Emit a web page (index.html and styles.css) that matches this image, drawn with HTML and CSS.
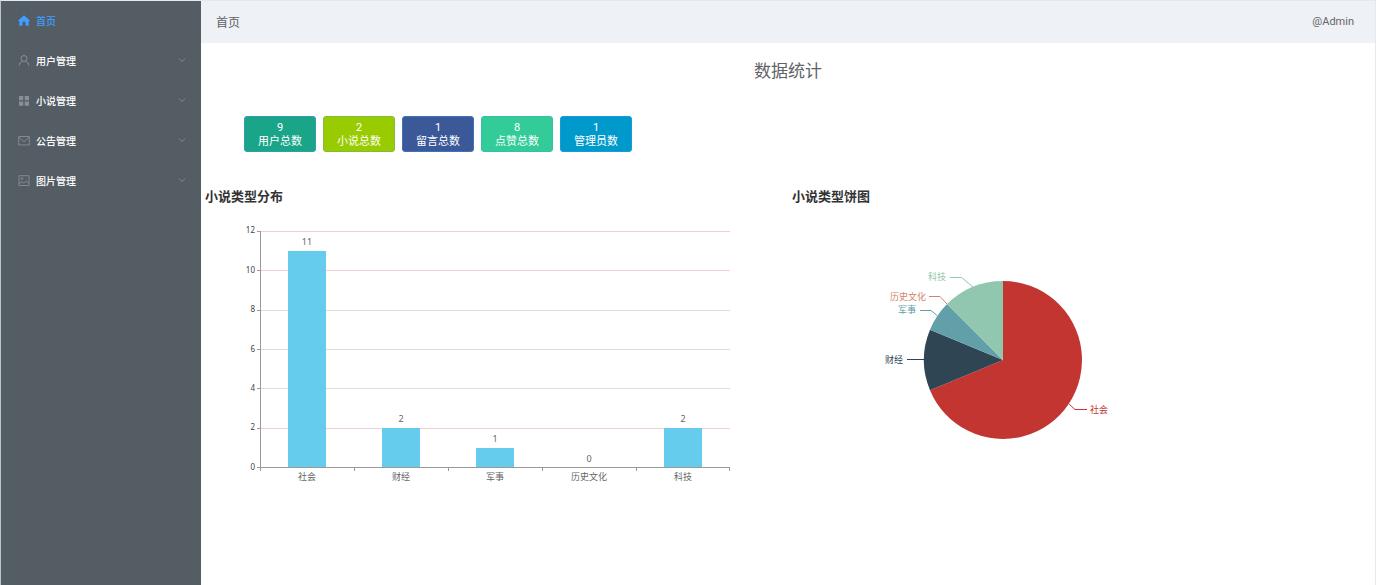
FILE: index.html
```html
<!DOCTYPE html>
<html lang="zh-CN">
<head>
  <meta charset="UTF-8" />
  <meta name="viewport" content="width=device-width, initial-scale=1" />
  <title>数据统计</title>
  <link rel="stylesheet" href="styles.css">
</head>
<body>

  <div class="layout">
    <!-- Sidebar -->
    <nav class="sidebar">
      <a href="#" class="menu-item active">
        <svg class="menu-icon" viewBox="0 0 12 12"><path d="M6 1.200 11.600 6.300v.9h-.9v4.600H7.600V9a1.600 1.600 0 0 0-3.200 0v2.800H1.300V7.200H.4v-.9z" fill="currentColor"/></svg>
        <span>首页</span>
      </a>
      <button type="button" class="menu-item">
        <svg class="menu-icon" viewBox="0 0 12 12"><g fill="none" stroke="currentColor"><circle cx="6" cy="4.500" r="3"/><path d="M1.200 11.800c0-2.500 1.600-4 3.300-4.400M10.800 11.800c0-2.500-1.600-4-3.300-4.400"/></g></svg>
        <span>用户管理</span>
        <svg class="arrow" viewBox="0 0 8 8"><path d="M.8 2.500 4 5.500l3.200-3" fill="none" stroke="currentColor"/></svg>
      </button>
      <button type="button" class="menu-item">
        <svg class="menu-icon" viewBox="0 0 12 12"><path d="M1 2h4.300v4.200H1zM6.700 2H11v4.200H6.700zM1 7.500h4.300v4.200H1zM6.700 7.500H11v4.200H6.700z" fill="currentColor"/></svg>
        <span>小说管理</span>
        <svg class="arrow" viewBox="0 0 8 8"><path d="M.8 2.500 4 5.500l3.200-3" fill="none" stroke="currentColor"/></svg>
      </button>
      <button type="button" class="menu-item">
        <svg class="menu-icon" viewBox="0 0 12 12"><path d="M.7 2.500h10.600v8.500H.7zM.7 3 4.500 6.700q1.500 1.200 3 0L11.300 3" fill="none" stroke="currentColor" stroke-width=".9"/></svg>
        <span>公告管理</span>
        <svg class="arrow" viewBox="0 0 8 8"><path d="M.8 2.500 4 5.500l3.200-3" fill="none" stroke="currentColor"/></svg>
      </button>
      <button type="button" class="menu-item">
        <svg class="menu-icon" viewBox="0 0 12 12"><g fill="none" stroke="currentColor" stroke-width=".9"><path d="M1 1.700h10v9.800H1zM1 9.800l2.700-2.200 2 1.500 2.500-2L11 9.300"/><circle cx="4" cy="4.600" r=".9"/></g></svg>
        <span>图片管理</span>
        <svg class="arrow" viewBox="0 0 8 8"><path d="M.8 2.500 4 5.500l3.200-3" fill="none" stroke="currentColor"/></svg>
      </button>
    </nav>

    <div class="content">
      <!-- Top bar -->
      <header class="topbar">
        <span class="crumb">首页</span>
        <span class="user">@Admin</span>
      </header>

      <main>
        <h1 class="page-title">数据统计</h1>

        <!-- Totals -->
        <div class="totals">
          <button type="button" class="total users"><span>9</span><span>用户总数</span></button>
          <button type="button" class="total novels"><span>2</span><span>小说总数</span></button>
          <button type="button" class="total messages"><span>1</span><span>留言总数</span></button>
          <button type="button" class="total likes"><span>8</span><span>点赞总数</span></button>
          <button type="button" class="total admins"><span>1</span><span>管理员数</span></button>
        </div>

        <!-- Charts -->
        <div class="charts">
          <section>
            <h2 class="chart-title">小说类型分布</h2>
            <svg class="chart" viewBox="0 0 560 280" role="img" aria-label="小说类型分布">
              <g class="grid">
                <path d="M56 15.500h469M56 54.500h469M56 212.500h469"/>
                <path class="soft" d="M56 94.500h469M56 133.500h469M56 172.500h469"/>
              </g>
              <g class="bars">
                <rect x="83" y="35" width="38" height="216"/>
                <rect x="177" y="212" width="38" height="39"/>
                <rect x="271" y="232" width="38" height="19"/>
                <rect x="459" y="212" width="38" height="39"/>
              </g>
              <path class="axis" d="M55.500 15v240M52 15.500h3M52 54.500h3M52 94.500h3M52 133.500h3M52 172.500h3M52 212.500h3M52 251.500h473M149.500 252v3M243.500 252v3M337.500 252v3M431.500 252v3M524.500 252v3"/>
              <g class="ticks">
                <text x="50" y="17">12</text>
                <text x="50" y="57">10</text>
                <text x="50" y="96">8</text>
                <text x="50" y="136">6</text>
                <text x="50" y="175">4</text>
                <text x="50" y="214">2</text>
                <text x="50" y="254">0</text>
              </g>
              <g class="names">
                <text x="102" y="264">社会</text>
                <text x="196" y="264">财经</text>
                <text x="290" y="264">军事</text>
                <text x="384" y="264">历史文化</text>
                <text x="478" y="264">科技</text>
              </g>
              <g class="values">
                <text x="102" y="29">11</text>
                <text x="196" y="206">2</text>
                <text x="290" y="226">1</text>
                <text x="384" y="246">0</text>
                <text x="478" y="206">2</text>
              </g>
            </svg>
          </section>

          <section>
            <h2 class="chart-title">小说类型饼图</h2>
            <svg class="chart" viewBox="0 0 560 280" role="img" aria-label="小说类型饼图">
              <path fill="#c23531" d="M211 144V65A79 79 0 1 1 138 174.200z"/>
              <path fill="#2f4554" d="M211 144 138 174.200A79 79 0 0 1 138 113.800z"/>
              <path fill="#61a0a8" d="M211 144 138 113.800A79 79 0 0 1 155.100 88.100z"/>
              <path fill="#91c7ae" d="M211 144 155.100 88.100A79 79 0 0 1 211 65z"/>
              <g class="leads">
                <path stroke="#c23531" d="M277 188 283 193.500h12"/>
                <path stroke="#2f4554" d="M132 143.500h-17"/>
                <path stroke="#61a0a8" d="M145 99.500 139 94.500h-11"/>
                <path stroke="#d48265" d="M155 88 148 80.500h-11"/>
                <path stroke="#91c7ae" d="M181 71 169.500 61.500h-11.500"/>
              </g>
              <g class="pie-names">
                <text x="316" y="197" fill="#c23531">社会</text>
                <text x="111" y="147" fill="#2f4554">财经</text>
                <text x="124" y="97" fill="#61a0a8">军事</text>
                <text x="134" y="84" fill="#d48265">历史文化</text>
                <text x="154" y="64" fill="#91c7ae">科技</text>
              </g>
            </svg>
          </section>
        </div>
      </main>
    </div>
  </div>

</body>
</html>
```
FILE: styles.css
```css
* {
  box-sizing: border-box;
}
body {
  margin: 0;
  font-family: Roboto, 'Noto Sans CJK SC', sans-serif;
  color: #606266;
  background: #fff;
}
/* Page frame */
.layout {
  display: flex;
  min-height: 100vh;
  border: 1px solid #e3e9f0;
  border-left-color: #b9c5cd;
  border-bottom: none;
}
/* Sidebar */
.sidebar {
  flex: none;
  width: 200px;
  background: #545c64;
}
.menu-item {
  display: flex;
  align-items: center;
  gap: 6px;
  width: 100%;
  height: 40px;
  padding: 0 15px 2px 17px;
  border: none;
  background: none;
  color: #fff;
  font-family: inherit;
  font-size: 10px;
  font-weight: 500;
  text-decoration: none;
  cursor: pointer;
}
.menu-item.active {
  color: #409eff;
}
.menu-icon {
  width: 12px;
  height: 12px;
  color: #888e95;
}
.active .menu-icon {
  color: #409eff;
}
.arrow {
  width: 8px;
  height: 8px;
  margin-left: auto;
  color: #7f858c;
}
/* Content */
.content {
  flex: 1;
  min-width: 0;
}
.topbar {
  display: flex;
  align-items: center;
  justify-content: space-between;
  height: 42px;
  padding: 0 21px 2px 15px;
  background: #eef1f6;
}
.crumb {
  font-size: 12px;
}
.user {
  font-size: 11px;
  color: #666;
}
.page-title {
  margin: 15px 0 0;
  font-size: 17px;
  font-weight: 400;
  line-height: 26px;
  text-align: center;
}
/* Totals */
.totals {
  display: flex;
  flex-wrap: wrap;
  gap: 7px;
  padding: 32px 43px 0;
}
.total {
  display: flex;
  flex-direction: column;
  align-items: center;
  justify-content: center;
  width: 72px;
  height: 36px;
  padding: 2px 0 0;
  border: 1px solid #2f9fae;
  border-radius: 3px;
  color: #fff;
  font-family: inherit;
  font-size: 11px;
  line-height: 14px;
  cursor: pointer;
}
.users {
  background: #1aa588;
}
.novels {
  background: #99cc00;
  border-color: #7dbb45;
}
.messages {
  background: #3b5999;
  border-color: #3d74b8;
}
.likes {
  background: #33cc99;
  border-color: #38bdb0;
}
.admins {
  background: #0099cc;
  border-color: #1a9bd8;
}
/* Charts */
.charts {
  display: grid;
  grid-template-columns: 1fr 1fr;
  padding-top: 35px;
}
.charts section {
  padding-left: 4px;
}
.chart-title {
  margin: 0;
  font-size: 13px;
  line-height: 20px;
  color: #333;
}
.chart {
  display: block;
  width: 560px;
  max-width: 100%;
  margin-top: 9px;
  font-family: 'Noto Sans', 'Noto Sans CJK SC', sans-serif;
  font-size: 9px;
}
.grid path {
  stroke: #f0cfd3;
}
.grid .soft {
  stroke: #e5dadf;
}
.bars {
  fill: #66ccee;
}
.axis {
  fill: none;
  stroke: #999;
}
.ticks {
  font-size: 8px;
  fill: #444;
  text-anchor: end;
}
.names,
.values {
  fill: #666;
  text-anchor: middle;
}
.leads path {
  fill: none;
}
.pie-names {
  text-anchor: end;
}
```
